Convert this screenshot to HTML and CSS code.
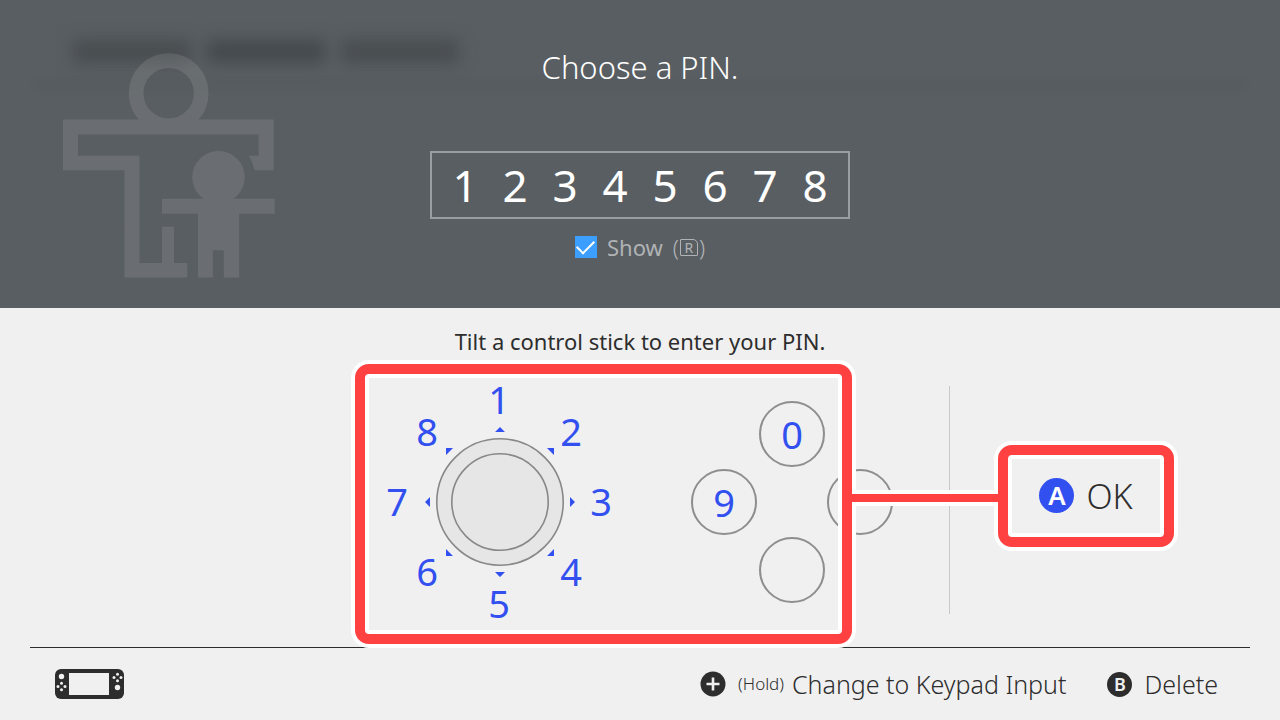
FILE: index.html
```
<!DOCTYPE html>
<html lang="en">
<head>
  <meta charset="UTF-8">
  <meta name="viewport" content="width=device-width, initial-scale=1.0">
  <title>Choose a PIN</title>
  <link rel="stylesheet" href="styles.css">
</head>
<body>
  <header class="top">
    <div class="backdrop" aria-hidden="true">
      <div class="words"><span></span><span></span><span></span></div>
      <div class="rule"></div>
    </div>
    <svg class="family" viewBox="68 98 638 677" aria-hidden="true">
      <circle cx="386" cy="219" r="98" fill="none" stroke="#fff" stroke-width="44"/>
      <path fill="#fff" d="M68 298H702V451H645Q639 425 627 407H657V343H113V407H298V730H366V621H402V730H442V774H253V451H68Z"/>
      <circle cx="536" cy="472" r="79" fill="#fff"/>
      <path fill="#fff" d="M366 537H705V582H598V774H552V692H519V774H474V582H366Z"/>
    </svg>

    <h1>Choose a PIN.</h1>
    <div class="pin" role="group" aria-label="PIN">
      <input type="text" maxlength="1" value="1" aria-label="Digit 1">
      <input type="text" maxlength="1" value="2" aria-label="Digit 2">
      <input type="text" maxlength="1" value="3" aria-label="Digit 3">
      <input type="text" maxlength="1" value="4" aria-label="Digit 4">
      <input type="text" maxlength="1" value="5" aria-label="Digit 5">
      <input type="text" maxlength="1" value="6" aria-label="Digit 6">
      <input type="text" maxlength="1" value="7" aria-label="Digit 7">
      <input type="text" maxlength="1" value="8" aria-label="Digit 8">
    </div>
    <div class="show">
      <input type="checkbox" id="show" checked>
      <label for="show">Show <span class="hint">(<span class="key-r">R</span>)</span></label>
    </div>
  </header>

  <main>
    <p class="help">Tilt a control stick to enter your PIN.</p>
    <div class="entry">
      <div class="controls">
        <svg class="dial" viewBox="0 0 240 240" role="img" aria-label="Control stick">
          <g fill="#e6e6e6" stroke="#888" stroke-width="1.6">
            <circle cx="120" cy="120" r="63.2"/>
            <circle cx="120" cy="120" r="48.2"/>
          </g>
          <path class="arrows" d="M115 50L120 45L125 50ZM190 115L195 120L190 125ZM115 190H125L120 195ZM50 115V125L45 120ZM66 66H73L66 73ZM174 66V73L167 66ZM174 174H167L174 167ZM66 174V167L73 174Z"/>
          <g class="numbers">
            <text x="119" y="32">1</text>
            <text x="191" y="64">2</text>
            <text x="221" y="134">3</text>
            <text x="191" y="204">4</text>
            <text x="119" y="236">5</text>
            <text x="47" y="204">6</text>
            <text x="17" y="134">7</text>
            <text x="47" y="64">8</text>
          </g>
        </svg>
        <div class="pad">
          <button class="up" type="button">0</button>
          <button class="left" type="button">9</button>
          <button class="right" type="button" aria-label="A"></button>
          <button class="down" type="button" aria-label="B"></button>
        </div>
        <div class="frame"></div>
      </div>
      <div class="divider"></div>
      <div class="confirm">
        <button class="ok" type="button"><span class="badge">A</span>OK</button>
      </div>
    </div>
  </main>

  <footer>
    <svg class="console" viewBox="0 0 69 30" aria-hidden="true">
      <rect width="69" height="30" rx="6" fill="#2d2d2d"/>
      <g fill="#f0f0f0">
        <rect x="14" y="4" width="40" height="22"/>
        <circle cx="6.5" cy="7.5" r="2.7"/>
        <circle cx="6.5" cy="14.2" r="1.5"/><circle cx="6.5" cy="20.8" r="1.5"/>
        <circle cx="3" cy="17.5" r="1.5"/><circle cx="10" cy="17.5" r="1.5"/>
        <circle cx="62.5" cy="5.2" r="1.5"/><circle cx="62.5" cy="11.8" r="1.5"/>
        <circle cx="59" cy="8.5" r="1.5"/><circle cx="66" cy="8.5" r="1.5"/>
        <circle cx="62.5" cy="18.5" r="2.7"/>
      </g>
    </svg>
    <div class="actions">
      <button type="button">
        <svg class="plus" viewBox="0 0 26 26" aria-hidden="true">
          <circle cx="13" cy="13" r="12.5" fill="#2d2d2d"/>
          <path d="M13 6.5V19.5M6.5 13H19.5" stroke="#f0f0f0" stroke-width="2.6"/>
        </svg>
        <small>(Hold)</small>Change to Keypad Input
      </button>
      <button type="button"><span class="badge small">B</span>Delete</button>
    </div>
  </footer>
</body>
</html>
```
FILE: styles.css
```
:root {
  --dark: #595e62;
  --light: #f0f0f0;
  --ink: #2d2d2d;
  --blue: #3250f0;
  --red: #ff4141;
}

* { box-sizing: border-box; }

body {
  margin: 0;
  min-height: 100vh;
  display: flex;
  flex-direction: column;
  background: var(--light);
  color: var(--ink);
  font-family: "Noto Sans", sans-serif;
}
button, input { font: inherit; color: inherit; }
button { border: 0; padding: 0; background: none; }

/* Top */
.top {
  position: relative;
  display: flex;
  flex-direction: column;
  align-items: center;
  padding: 47px 0;
  background: var(--dark);
  color: #fff;
  overflow: hidden;
}
.backdrop { position: absolute; inset: 40px 35px auto; }
.words { display: flex; gap: 16px; padding-left: 38px; filter: blur(8px); }
.words span { width: 118px; height: 23px; background: #3f4447; opacity: 0.65; }
.words span:nth-child(2) { opacity: 0.8; }
.rule { height: 3px; margin-top: 20px; background: #45494c; opacity: 0.4; filter: blur(5px); }
.family { position: absolute; left: 63px; top: 53px; width: 212px; opacity: 0.1; }
.top h1 { position: relative; margin: 0 0 64px; font-size: 31px; line-height: 40px; font-weight: 300; }
.pin { display: flex; padding: 0 8px; border: 2px solid #9b9ea0; }
.pin input {
  width: 50px;
  height: 64px;
  padding: 0;
  border: 0;
  background: none;
  font-size: 44px;
  text-align: center;
}
.show { display: flex; align-items: center; gap: 10px; margin-top: 14px; height: 28px; color: #b0b3b5; font-size: 22px; }
.show input {
  appearance: none;
  display: grid;
  place-items: center;
  width: 22px;
  height: 22px;
  margin: 0;
  background: #3c9fff;
}
.show input:checked::after {
  content: "";
  width: 15px;
  height: 8px;
  border: solid #fff;
  border-width: 0 0 2px 2px;
  transform: translateY(-2px) rotate(-45deg);
}
.show label { display: flex; gap: 10px; line-height: 28px; }
.hint { display: flex; align-items: center; gap: 1px; font-weight: 300; }
.key-r {
  width: 18px;
  height: 17px;
  border: 1px solid;
  border-radius: 1px 5px 1px 1px;
  font-size: 14px;
  line-height: 15px;
  font-weight: 400;
  text-align: center;
}

/* Entry */
main { flex: 1; display: flex; flex-direction: column; }
.help { margin: 19px 0 1px; font-size: 22px; line-height: 28px; text-align: center; }
.entry { flex: 1; display: grid; grid-template-columns: 580px 1px 330px; justify-content: end; align-items: center; }
.controls { position: relative; align-self: stretch; display: flex; align-items: center; gap: 70px; padding-left: 11px; }
.dial { width: 240px; height: 240px; overflow: visible; }
.arrows { fill: var(--blue); }
.numbers { fill: var(--blue); font-size: 38px; text-anchor: middle; }
.pad {
  display: grid;
  grid-template: repeat(3, 68px) / repeat(3, 68px);
  grid-template-areas: ". up ." "left . right" ". down .";
  place-items: center;
}
.pad button { width: 66px; height: 66px; border: 2px solid #8e8e8e; border-radius: 50%; color: var(--blue); font-size: 38px; line-height: 58px; }
.up { grid-area: up; }
.left { grid-area: left; }
.right { grid-area: right; }
.down { grid-area: down; }
.divider { height: 228px; margin-bottom: 4px; background: #c8c8c8; }

/* Highlight frames */
.frame, .ok {
  border: 10px solid var(--red);
  border-radius: 14px;
  box-shadow: 0 0 0 4px #fff, inset 0 0 0 4px #fff;
}
.frame { position: absolute; left: -14px; top: 8px; width: 497px; bottom: 3px; pointer-events: none; }
.confirm { padding: 0 0 12px 48px; }
.ok {
  position: relative;
  display: flex;
  justify-content: center;
  align-items: center;
  gap: 12px;
  width: 176px;
  height: 102px;
  font-size: 34px;
  font-weight: 300;
}
.ok::before {
  content: "";
  position: absolute;
  top: 39px;
  right: calc(100% + 10px);
  width: 146px;
  height: 8px;
  background: var(--red);
  box-shadow: 0 -4px #fff, 0 4px #fff;
}
.badge {
  width: 35px;
  height: 35px;
  border-radius: 50%;
  background: var(--blue);
  color: #fff;
  font-size: 26px;
  line-height: 34px;
  font-weight: 600;
  text-align: center;
}
.badge.small { width: 25px; height: 25px; background: var(--ink); color: var(--light); font-size: 18px; line-height: 25px; }

/* Footer */
footer {
  display: flex;
  justify-content: space-between;
  align-items: center;
  height: 73px;
  margin: 0 30px;
  padding: 0 32px 0 25px;
  border-top: 1px solid var(--ink);
}
.console { width: 69px; height: 30px; }
.actions { display: flex; gap: 41px; }
.actions button { display: flex; align-items: center; gap: 12px; font-size: 25px; line-height: 32px; font-weight: 300; }
.actions small { margin-right: -4px; font-size: 17px; }
.plus { width: 26px; height: 26px; }
```
